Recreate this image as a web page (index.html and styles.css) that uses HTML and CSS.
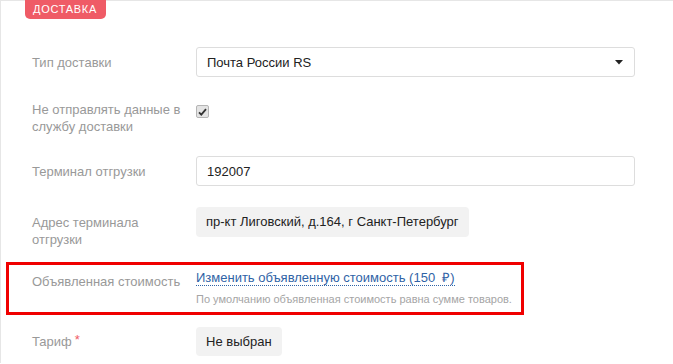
FILE: index.html
```html
<!DOCTYPE html>
<html lang="ru">
<head>
<meta charset="utf-8">
<link rel="stylesheet" href="styles.css">
</head>
<body>
<div class="panel">
  <div class="badge">ДОСТАВКА</div>
  <div class="row row-1">
    <div class="label">Тип доставки</div>
    <div class="control">
      <div class="select">
        <span>Почта России RS</span>
        <svg class="caret" width="8" height="5" viewBox="0 0 8 5"><path d="M0 0H8L4 4.5Z" fill="#222"/></svg>
      </div>
    </div>
  </div>
  <div class="row row-2">
    <div class="label">Не отправлять данные в службу доставки</div>
    <div class="control">
      <span class="checkbox">
        <svg width="9" height="8" viewBox="0 0 9 8"><path d="M1 4.3L3.3 6.6L8 1.2" stroke="#333" stroke-width="1.8" fill="none"/></svg>
      </span>
    </div>
  </div>
  <div class="row row-3">
    <div class="label">Терминал отгрузки</div>
    <div class="control">
      <div class="input">192007</div>
    </div>
  </div>
  <div class="row row-4">
    <div class="label">Адрес терминала отгрузки</div>
    <div class="control">
      <div class="static">пр-кт Лиговский, д.164, г Санкт-Петербург</div>
    </div>
  </div>
  <div class="row row-5">
    <div class="label">Объявленная стоимость</div>
    <div class="control">
      <a class="link">Изменить объявленную стоимость (150 &nbsp;₽)</a>
      <div class="help">По умолчанию объявленная стоимость равна сумме товаров.</div>
    </div>
  </div>
  <div class="row row-6">
    <div class="label">Тариф<span class="req">*</span></div>
    <div class="control">
      <div class="static">Не выбран</div>
    </div>
  </div>
</div>
</body>
</html>
```
FILE: styles.css
```css
html, body {
  margin: 0;
  padding: 0;
  background: #fff;
}
body {
  font-family: "Liberation Sans", Arial, sans-serif;
  font-size: 13px;
  color: #333;
  width: 673px;
  height: 364px;
  overflow: hidden;
}
.panel {
  border-top: 1px solid #e6e6e6;
  border-left: 1px solid #e6e6e6;
  height: 363px;
  box-sizing: border-box;
  padding-left: 31px;
}
.badge {
  display: inline-block;
  margin-left: -7px;
  margin-top: -1px;
  background: #ef5b66;
  color: #fff;
  font-size: 11px;
  letter-spacing: 0.7px;
  line-height: 19px;
  height: 19px;
  padding: 0 9px 0 8px;
  border-radius: 0 0 5px 5px;
}
.row {
  display: flex;
  align-items: flex-start;
}
.label {
  width: 164px;
  flex: none;
  color: #999;
  line-height: 17px;
  padding-top: 7px;
  box-sizing: border-box;
  padding-right: 10px;
}
.control {
  width: 439px;
}
.row-1 { margin-top: 28px; }
.row-2 { margin-top: 24px; }
.row-3 { margin-top: 21px; }
.row-4 { margin-top: 21px; }
.row-5 {
  margin-top: 14px;
  margin-left: -26px;
  padding-left: 23px;
  width: 518px;
  height: 53px;
  box-sizing: border-box;
  border: 3px solid #f00000;
}
.row-6 { margin-top: 12px; }

.select, .input {
  height: 30px;
  box-sizing: border-box;
  border: 1px solid #ddd;
  border-radius: 3px;
  padding: 0 10px;
  display: flex;
  align-items: center;
  color: #222;
}
.select { justify-content: space-between; }
.caret { margin-right: 1px; }
.row-2 .label { padding-top: 0; }
.checkbox {
  display: inline-flex;
  align-items: center;
  justify-content: center;
  width: 11px;
  height: 11px;
  margin-top: 4px;
  border: 1px solid #b5b5b5;
  border-radius: 2px;
  background: #e4e4e4;
}
.static {
  display: inline-block;
  background: #f2f2f2;
  border-radius: 4px;
  height: 29px;
  line-height: 29px;
  padding: 0 10px;
  color: #222;
}
.row-4 .static { height: 30px; line-height: 30px; }
.row-5 .label { padding-top: 8px; }
.row-5 .control { padding-top: 5px; }
.link {
  color: #2f63a6;
  text-decoration: none;
  border-bottom: 1px dotted #2f63a6;
  line-height: 15px;
  display: inline-block;
}
.help {
  color: #a5a5a5;
  font-size: 11px;
  margin-top: 7px;
  line-height: 13px;
}
.row-6 .label { padding-top: 6px; }
.req {
  color: #ef5b66;
  margin-left: 3px;
  position: relative;
  top: -2px;
}
```
